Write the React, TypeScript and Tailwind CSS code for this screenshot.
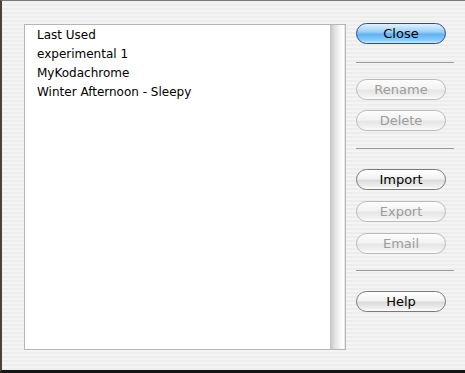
const presets = ["Last Used", "experimental 1", "MyKodachrome", "Winter Afternoon - Sleepy"];

function AquaButton({ label, primary, disabled, className = "" }: { label: string; primary?: boolean; disabled?: boolean; className?: string }) {
  let look =
    "border-[#7a7a7a] text-black bg-[linear-gradient(to_bottom,#ffffff_0%,#f2f2f2_45%,#dcdcdc_55%,#eeeeee_85%,#ffffff_100%)]";
  if (primary) {
    look =
      "border-[#2c4b8c] text-black bg-[linear-gradient(to_bottom,#e2f2ff_0%,#9fd0f8_40%,#63b1f0_55%,#86cdfc_85%,#c9ecff_100%)]";
  } else if (disabled) {
    look =
      "border-[#b9b9b9] text-[#9c9c9c] bg-[linear-gradient(to_bottom,#fdfdfd_0%,#f3f3f3_45%,#e6e6e6_55%,#f1f1f1_85%,#fdfdfd_100%)]";
  }
  return (
    <button
      className={`w-[90px] h-[21px] rounded-full border flex items-center justify-center text-[13px] leading-none ${look} ${className}`}
    >
      {label}
    </button>
  );
}

function Separator({ className = "" }: { className?: string }) {
  return <div className={`h-px w-[98px] bg-[#9a9a9a] ${className}`} />;
}

export default function App() {
  return (
    <div
      className="w-[465px] h-[373px] flex items-start pt-[22px] pl-[22px] border-t border-t-[#7a7a7a] border-l-2 border-l-[#4d4034] border-b-[3px] border-b-[#151515] bg-[repeating-linear-gradient(0deg,#ededed_0px,#ededed_2px,#f4f4f4_2px,#f4f4f4_4px)] overflow-hidden"
      style={{ fontFamily: '"DejaVu Sans", "Liberation Sans", sans-serif' }}
    >
      {/* preset list */}
      <div className="mt-px w-[322px] h-[326px] border border-[#b5b5b5] bg-white flex">
        <div className="flex-1 pl-[12px] flex flex-col">
          {presets.map((p) => (
            <div key={p} className="h-[19px] flex items-center text-[12px] text-black">
              {p}
            </div>
          ))}
        </div>
        <div className="w-[15px] h-full bg-[linear-gradient(to_right,#c4c4c4_0%,#e4e4e4_35%,#f8f8f8_70%,#ffffff_90%,#dcdcdc_100%)]" />
      </div>

      {/* button column */}
      <div className="ml-[10px] flex flex-col">
        <AquaButton label="Close" primary />
        <Separator className="mt-[18px]" />
        <AquaButton label="Rename" disabled className="mt-[16px]" />
        <AquaButton label="Delete" disabled className="mt-[10px]" />
        <Separator className="mt-[17px]" />
        <AquaButton label="Import" className="mt-[20px]" />
        <AquaButton label="Export" disabled className="mt-[11px]" />
        <AquaButton label="Email" disabled className="mt-[11px]" />
        <Separator className="mt-[16px]" />
        <AquaButton label="Help" className="mt-[20px]" />
      </div>
    </div>
  );
}
